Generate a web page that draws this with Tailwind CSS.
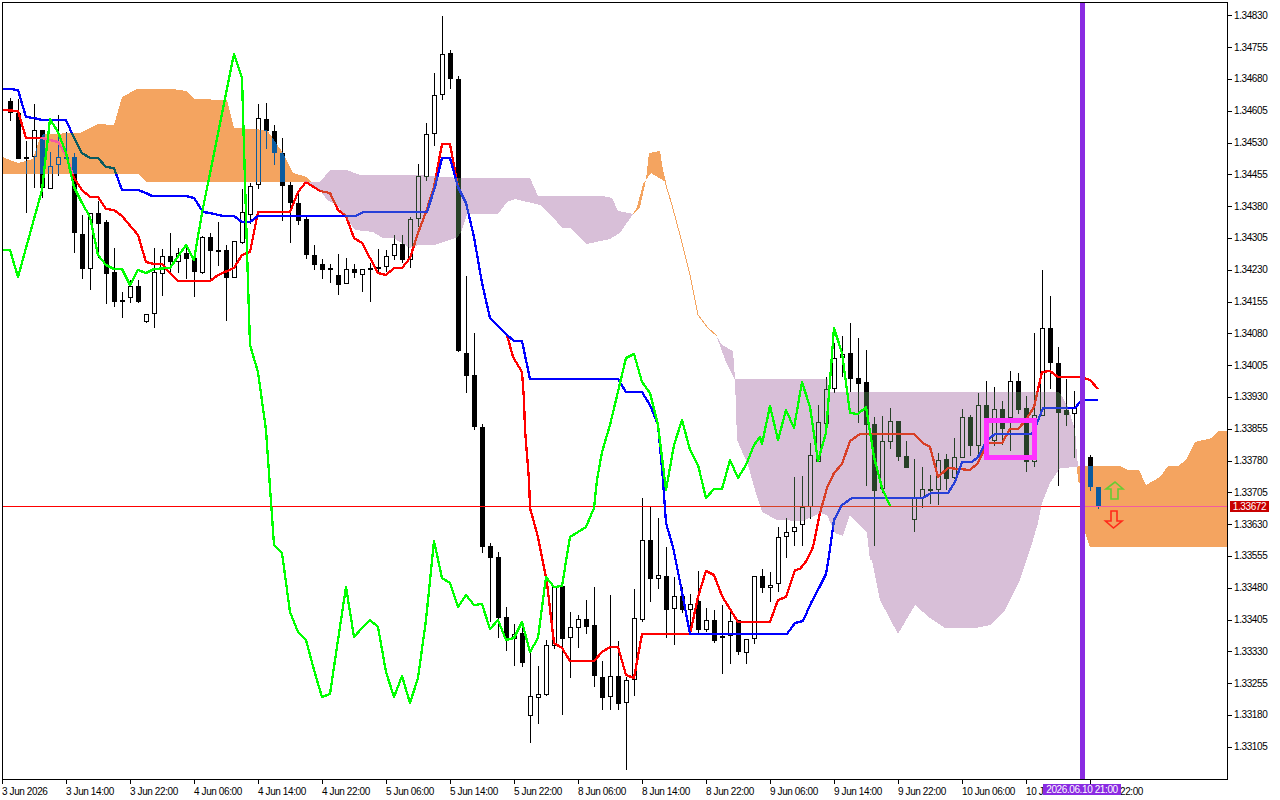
<!DOCTYPE html>
<html lang="en">
<head>
<meta charset="utf-8">
<title>Chart</title>
<script src="https://cdn.jsdelivr.net/npm/@tailwindcss/browser@4"></script>
</head>
<body class="bg-white overflow-hidden">
<div class="relative flex flex-col w-[1280px] h-[800px] bg-white text-black text-[10px] tracking-[-0.4px] leading-none font-['Liberation_Sans',sans-serif]">
  <div class="flex h-[780px]">
    <svg class="block w-[1228px] h-[780px] isolate shrink-0" viewBox="0 0 1228 780" xmlns="http://www.w3.org/2000/svg">
      <rect width="1228" height="780" fill="#fff"/>
      <path id="wicks" fill="none" stroke="#000" stroke-width="1" shape-rendering="crispEdges"/>
      <path id="bodiesDown" fill="#000" shape-rendering="crispEdges"/>
      <path id="bodiesUp" fill="#fff" stroke="#000" stroke-width="1" shape-rendering="crispEdges"/>
      <path d="M2 506.5H1227" stroke="#f00" stroke-width="1" shape-rendering="crispEdges"/>
      <polyline id="tenkan" fill="none" stroke="#f00" stroke-width="2.3" shape-rendering="crispEdges" stroke-linejoin="round" points="3,110 18,111 26,138 42,138 58,142 66,155 74,178 82,190 90,197 98,197 106,209 114,210 122,216 138,235 146,262 154,264 162,264 170,273 178,281 210,281 218,275 234,268 242,255 250,252 258,212 290,212 298,192 306,182 320,191 330,193 338,210 346,216 354,238 362,243 370,258 378,273 386,275 394,268 402,268 410,258 418,233 426,212 434,187 442,144 450,144 458,187 466,203 474,237 482,283 490,318 507,335 513,357 522,372 524,400 525,430 529,480 530,508 538,537 547,583 554,643 562,648 570,661 594,661 602,652 610,647 618,647 626,675 634,678 642,634 690,634 698,597 706,571 714,575 722,596 738,622 770,622 778,600 786,597 795,570 800,569 807,560 813,547 820,513 827,488 834,473 842,464 850,441 860,434 914,434 923,443 930,447 938,477 948,468 970,470 978,463 987,443 1002,443 1010,429 1018,429 1026,420 1034,407 1042,372 1050,371 1058,377 1080,377 1090,380 1098,389"/>
      <polyline id="kijun" fill="none" stroke="#00f" stroke-width="2.3" shape-rendering="crispEdges" stroke-linejoin="round" points="3,89 10,89 18,90 26,117 34,118 42,120 66,120 74,138 82,153 90,158 98,158 106,167 114,168 122,190 138,190 146,193 152,196 186,196 194,198 203,212 210,213 223,216 234,216 242,222 250,222 258,216 356,216 363,212 427,212 435,187 442,158 450,158 458,187 466,203 474,237 482,283 490,318 507,335 514,341 522,341 530,379 618,379 626,392 642,392 650,405 658,425 663,480 666,523 673,547 681,587 690,634 787,634 795,623 803,621 811,603 819,588 826,574 829,556 834,520 842,505 852,498 923,498 931,493 948,493 955,482 962,462 972,462 978,457 987,440 995,434 1032,434 1037,423 1043,408 1075,408 1080,402 1085,400 1098,400"/>
      <g class="mix-blend-difference" shape-rendering="crispEdges">
        <path fill="#0b5b9f" d="M3 157L10 160L18 163L33 159L38 143L43 134L80 133L98 124L114 125L122 97L137 89L173 89L186 91L194 99L227 100L234 128L267 130L283 153L293 173L307 177L311 182L147 182L138 174L3 174Z"/>
        <path fill="#0b5b9f" d="M633 214L640 207L646 180L649 153L660 151L663 170L666 182L651 173L643 184L637 207Z"/>
        <path fill="none" stroke="#0b5b9f" stroke-width="1" d="M665 182L672 205L680 235L690 275L698 315L708 328L717 336"/>
        <path fill="#0b5b9f" d="M1077 466L1120 466L1128 470L1139 470L1146 485L1160 477L1168 466L1178 466L1186 460L1195 442L1212 438L1218 431L1227 431L1227 547L1090 547L1085 533L1080 483L1078 482Z"/>
        <path fill="#274027" d="M308 182L320 182L330 170L347 170L360 175L417 175L460 178L530 178L538 196L603 196L612 198L618 211L633 214L620 233L610 239L587 244L570 228L562 228L553 217L540 205L515 199L507 202L498 214L467 214L462 230L458 237L443 242L435 245L418 245L410 248L393 238L383 238L373 232L355 230L337 205L327 200L320 190Z"/>
        <path fill="#274027" d="M716 335L722 345L733 351L735 379L828 379L828 392L1057 392L1060 393L1068 407L1075 430L1078 467L1060 468L1050 483L1042 503L1038 523L1030 550L1020 580L1005 610L990 625L975 628L945 628L930 618L915 605L898 634L880 600L872 560L870 560L867 533L850 515L843 536L835 533L827 515L820 513L803 521L777 520L762 512L755 490L748 465L737 440L735 380L726 362Z"/>
      </g>
      <polyline id="chikou" fill="none" stroke="#0f0" stroke-width="2.3" shape-rendering="crispEdges" stroke-linejoin="round" points="3,250 10,250 18,277 42,190 50,119 58,132 66,153 74,187 82,203 90,217 98,255 106,265 114,269 122,269 130,285 138,270 146,273 154,269 170,268 186,245 194,260 202,213 234,54 242,78 244,147 247,250 248,283 250,345 258,372 266,430 274,545 282,553 290,612 298,632 306,640 314,670 322,697 330,694 338,640 346,587 354,637 362,628 370,620 378,627 386,672 394,697 402,676 410,703 418,678 426,620 434,541 442,578 450,583 458,607 466,595 474,605 482,604 490,629 498,620 506,640 514,638 522,622 530,652 538,638 546,577 554,587 562,586 570,537 586,527 594,508 597,480 602,452 610,425 616,400 626,358 634,354 642,382 650,393 658,425 666,490 674,445 682,420 690,450 698,465 706,498 714,489 722,489 730,460 738,478 746,465 754,445 760,437 762,444 770,406 778,440 786,410 794,428 802,382 810,407 818,461 826,433 834,328 842,353 850,413 858,414 866,407 874,457 882,488 890,506"/>
      <path d="M1106 489L1115 482L1123 489L1118 489L1118 499L1111 499L1111 489Z" fill="none" stroke="#66cc33" stroke-width="1.6"/>
      <path d="M1111 511L1117 511L1117 521L1122 521L1113.5 528L1105.5 521L1111 521Z" fill="none" stroke="#ff2a1a" stroke-width="1.6"/>
      <rect x="986.5" y="420.5" width="48" height="37" fill="none" stroke="#ff33ff" stroke-width="5" shape-rendering="crispEdges"/>
      <rect x="1080" y="3" width="5" height="776" fill="#8a2be2"/>
      <path d="M2.5 780V2.5H1227.5V780M2 779.5H1228" fill="none" stroke="#000" stroke-width="1" shape-rendering="crispEdges"/>
    </svg>
    <div class="flex flex-col w-[52px]">
      <div class="flex items-center h-[31.8px]"><i class="block w-[4px] h-px bg-black"></i><span class="ml-[2px]">1.34830</span></div>
      <div class="flex items-center h-[31.8px]"><i class="block w-[4px] h-px bg-black"></i><span class="ml-[2px]">1.34755</span></div>
      <div class="flex items-center h-[31.8px]"><i class="block w-[4px] h-px bg-black"></i><span class="ml-[2px]">1.34680</span></div>
      <div class="flex items-center h-[31.8px]"><i class="block w-[4px] h-px bg-black"></i><span class="ml-[2px]">1.34605</span></div>
      <div class="flex items-center h-[31.8px]"><i class="block w-[4px] h-px bg-black"></i><span class="ml-[2px]">1.34530</span></div>
      <div class="flex items-center h-[31.8px]"><i class="block w-[4px] h-px bg-black"></i><span class="ml-[2px]">1.34455</span></div>
      <div class="flex items-center h-[31.8px]"><i class="block w-[4px] h-px bg-black"></i><span class="ml-[2px]">1.34380</span></div>
      <div class="flex items-center h-[31.8px]"><i class="block w-[4px] h-px bg-black"></i><span class="ml-[2px]">1.34305</span></div>
      <div class="flex items-center h-[31.8px]"><i class="block w-[4px] h-px bg-black"></i><span class="ml-[2px]">1.34230</span></div>
      <div class="flex items-center h-[31.8px]"><i class="block w-[4px] h-px bg-black"></i><span class="ml-[2px]">1.34155</span></div>
      <div class="flex items-center h-[31.8px]"><i class="block w-[4px] h-px bg-black"></i><span class="ml-[2px]">1.34080</span></div>
      <div class="flex items-center h-[31.8px]"><i class="block w-[4px] h-px bg-black"></i><span class="ml-[2px]">1.34005</span></div>
      <div class="flex items-center h-[31.8px]"><i class="block w-[4px] h-px bg-black"></i><span class="ml-[2px]">1.33930</span></div>
      <div class="flex items-center h-[31.8px]"><i class="block w-[4px] h-px bg-black"></i><span class="ml-[2px]">1.33855</span></div>
      <div class="flex items-center h-[31.8px]"><i class="block w-[4px] h-px bg-black"></i><span class="ml-[2px]">1.33780</span></div>
      <div class="flex items-center h-[31.8px]"><i class="block w-[4px] h-px bg-black"></i><span class="ml-[2px]">1.33705</span></div>
      <div class="flex items-center h-[31.8px]"><i class="block w-[4px] h-px bg-black"></i><span class="ml-[2px]">1.33630</span></div>
      <div class="flex items-center h-[31.8px]"><i class="block w-[4px] h-px bg-black"></i><span class="ml-[2px]">1.33555</span></div>
      <div class="flex items-center h-[31.8px]"><i class="block w-[4px] h-px bg-black"></i><span class="ml-[2px]">1.33480</span></div>
      <div class="flex items-center h-[31.8px]"><i class="block w-[4px] h-px bg-black"></i><span class="ml-[2px]">1.33405</span></div>
      <div class="flex items-center h-[31.8px]"><i class="block w-[4px] h-px bg-black"></i><span class="ml-[2px]">1.33330</span></div>
      <div class="flex items-center h-[31.8px]"><i class="block w-[4px] h-px bg-black"></i><span class="ml-[2px]">1.33255</span></div>
      <div class="flex items-center h-[31.8px]"><i class="block w-[4px] h-px bg-black"></i><span class="ml-[2px]">1.33180</span></div>
      <div class="flex items-center h-[31.8px]"><i class="block w-[4px] h-px bg-black"></i><span class="ml-[2px]">1.33105</span></div>
    </div>
  </div>
  <div class="flex pl-[2px] h-[20px]">
    <div class="w-16 shrink-0"><i class="block w-px h-[4px] bg-black"></i><div class="pt-[3px]">3 Jun 2026</div></div>
    <div class="w-16 shrink-0"><i class="block w-px h-[4px] bg-black"></i><div class="pt-[3px]">3 Jun 14:00</div></div>
    <div class="w-16 shrink-0"><i class="block w-px h-[4px] bg-black"></i><div class="pt-[3px]">3 Jun 22:00</div></div>
    <div class="w-16 shrink-0"><i class="block w-px h-[4px] bg-black"></i><div class="pt-[3px]">4 Jun 06:00</div></div>
    <div class="w-16 shrink-0"><i class="block w-px h-[4px] bg-black"></i><div class="pt-[3px]">4 Jun 14:00</div></div>
    <div class="w-16 shrink-0"><i class="block w-px h-[4px] bg-black"></i><div class="pt-[3px]">4 Jun 22:00</div></div>
    <div class="w-16 shrink-0"><i class="block w-px h-[4px] bg-black"></i><div class="pt-[3px]">5 Jun 06:00</div></div>
    <div class="w-16 shrink-0"><i class="block w-px h-[4px] bg-black"></i><div class="pt-[3px]">5 Jun 14:00</div></div>
    <div class="w-16 shrink-0"><i class="block w-px h-[4px] bg-black"></i><div class="pt-[3px]">5 Jun 22:00</div></div>
    <div class="w-16 shrink-0"><i class="block w-px h-[4px] bg-black"></i><div class="pt-[3px]">8 Jun 06:00</div></div>
    <div class="w-16 shrink-0"><i class="block w-px h-[4px] bg-black"></i><div class="pt-[3px]">8 Jun 14:00</div></div>
    <div class="w-16 shrink-0"><i class="block w-px h-[4px] bg-black"></i><div class="pt-[3px]">8 Jun 22:00</div></div>
    <div class="w-16 shrink-0"><i class="block w-px h-[4px] bg-black"></i><div class="pt-[3px]">9 Jun 06:00</div></div>
    <div class="w-16 shrink-0"><i class="block w-px h-[4px] bg-black"></i><div class="pt-[3px]">9 Jun 14:00</div></div>
    <div class="w-16 shrink-0"><i class="block w-px h-[4px] bg-black"></i><div class="pt-[3px]">9 Jun 22:00</div></div>
    <div class="w-16 shrink-0"><i class="block w-px h-[4px] bg-black"></i><div class="pt-[3px]">10 Jun 06:00</div></div>
    <div class="w-16 shrink-0"><i class="block w-px h-[4px] bg-black"></i><div class="pt-[3px]">10 Jun 14:00</div></div>
    <div class="w-16 shrink-0"><i class="block w-px h-[4px] bg-black"></i><div class="pt-[3px]">10 Jun 22:00</div></div>
  </div>
  <div class="absolute left-[1230px] top-[501px] flex items-center justify-center w-[39px] h-[11px] bg-[#c80000] text-white">1.33672</div>
  <div class="absolute left-[1043px] top-[784px] flex items-center justify-center w-[78px] h-[11px] bg-[#8a2be2] text-white">2026.06.10 21:00</div>
</div>
<script>
const C=[[10,98,101,113,121,0],[18,99,113,159,159,0],[26,141,157,159,213,0],[34,104,130,157,188,1],[42,130,130,188,198,0],[50,152,166,189,189,1],[58,115,157,165,176,1],[66,132,157,158,158,0],[74,153,157,233,253,0],[82,215,234,269,279,0],[90,213,213,269,290,1],[98,201,213,224,258,0],[106,220,222,274,304,0],[114,248,272,302,307,0],[122,292,300,301,318,1],[130,280,286,298,303,1],[138,280,286,302,303,0],[146,314,314,322,323,1],[154,248,272,314,328,1],[162,249,256,274,296,1],[170,233,256,262,273,0],[178,248,253,262,273,1],[186,244,253,259,279,0],[194,250,258,272,297,0],[202,236,237,273,274,1],[210,233,237,251,280,0],[218,222,250,251,266,0],[226,245,250,278,321,0],[234,241,241,278,278,1],[242,189,212,243,244,1],[250,183,186,215,224,1],[258,104,118,185,189,1],[266,103,119,131,149,0],[274,125,131,153,165,0],[282,138,153,186,221,0],[290,182,185,203,243,0],[298,193,203,221,225,0],[306,216,219,255,259,0],[314,245,255,265,270,0],[322,259,264,270,279,0],[330,264,268,270,283,0],[338,254,275,285,295,0],[346,258,269,284,284,1],[354,264,269,273,278,0],[362,269,269,275,292,1],[370,263,268,269,302,0],[378,249,267,268,273,0],[386,250,256,267,272,1],[394,235,244,256,260,1],[402,235,244,260,263,0],[410,217,219,260,268,1],[418,164,176,219,227,1],[426,123,134,177,181,1],[434,73,95,134,146,1],[442,16,54,95,100,1],[450,50,53,79,89,0],[458,76,79,351,352,0],[466,276,353,376,393,0],[474,333,375,427,430,0],[482,424,427,547,553,0],[490,543,546,558,622,0],[498,552,557,618,638,0],[506,607,617,638,651,0],[514,624,634,639,666,1],[522,624,633,663,667,0],[530,652,696,716,743,1],[538,666,694,698,724,1],[546,640,645,695,696,1],[554,586,586,646,649,1],[562,586,586,639,715,0],[570,612,627,638,678,1],[578,615,619,628,648,1],[586,600,619,627,634,0],[594,587,625,676,687,0],[602,661,677,698,710,0],[610,595,676,697,710,1],[618,641,676,704,710,0],[626,677,680,703,770,1],[634,589,618,680,696,1],[642,498,540,620,622,1],[650,507,540,579,602,0],[658,518,575,579,589,1],[666,547,576,610,638,0],[674,577,596,609,645,1],[682,587,596,610,613,0],[690,594,604,610,633,1],[698,571,601,630,633,0],[706,608,620,630,632,1],[714,610,620,641,643,0],[722,605,636,638,674,1],[730,610,621,636,664,1],[738,620,620,652,655,0],[746,639,639,653,664,1],[754,576,576,639,644,1],[762,569,576,588,593,0],[770,572,585,588,602,1],[778,527,537,584,592,1],[786,518,532,537,558,1],[794,477,527,532,546,1],[802,476,507,525,546,1],[810,443,455,507,519,1],[818,405,422,462,462,1],[826,377,389,424,434,1],[834,343,358,389,393,1],[842,336,354,358,377,1],[850,323,353,379,392,0],[858,338,378,384,423,0],[866,350,382,425,486,0],[874,417,424,491,546,0],[882,416,441,489,493,1],[890,408,421,442,449,1],[898,421,421,457,461,0],[906,441,456,468,468,0],[914,459,498,520,532,1],[922,467,489,498,508,1],[930,475,489,490,504,0],[938,453,460,490,505,1],[946,454,459,479,490,0],[954,438,457,478,479,1],[962,409,417,458,458,1],[970,415,417,446,456,0],[978,393,405,446,456,1],[986,381,405,443,457,0],[994,387,409,441,446,1],[1002,401,409,429,445,0],[1010,371,381,418,451,1],[1018,373,381,410,414,0],[1026,396,408,462,472,0],[1034,333,415,462,467,1],[1042,270,328,416,416,1],[1050,296,328,363,389,0],[1058,347,363,413,486,0],[1066,379,410,415,426,0],[1074,391,408,414,458,1],[1090,455,457,487,491,0],[1098,487,487,507,509,0]];
let w='',d='',u='';
for(const [x,h,t,b,l,up] of C){
  w+=`M${x+.5} ${h}V${l}`;
  if(up)u+=`M${x-1.5} ${t+.5}h4v${Math.max(b-t-1,1)}h-4z`;
  else d+=`M${x-2} ${t}h5v${Math.max(b-t,2)}h-5z`;
}
document.getElementById('wicks').setAttribute('d',w);
document.getElementById('bodiesDown').setAttribute('d',d);
document.getElementById('bodiesUp').setAttribute('d',u);
</script>
</body>
</html>
